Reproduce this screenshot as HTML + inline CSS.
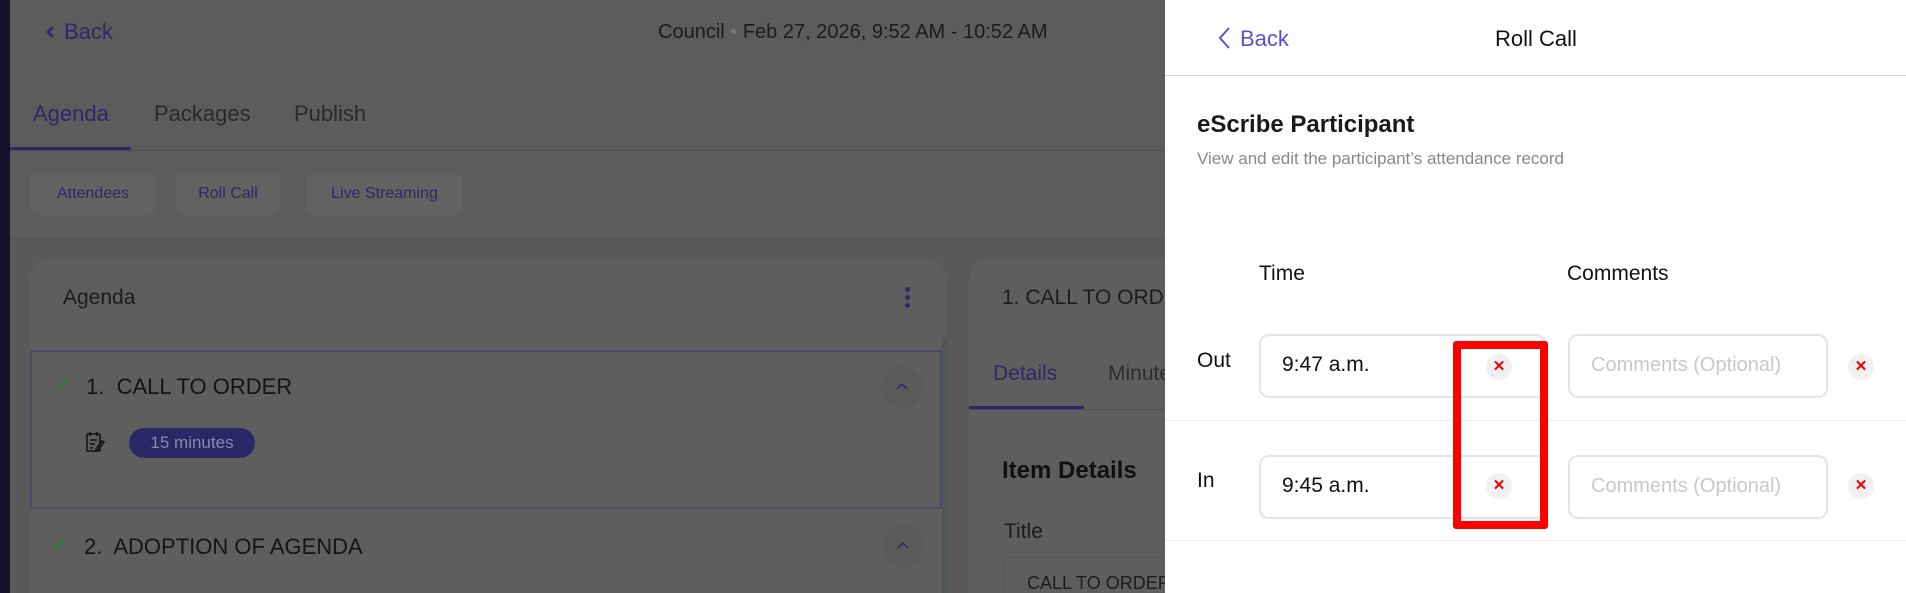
<!DOCTYPE html>
<html style="width:1906px;height:593px;overflow:hidden"><head><meta charset="utf-8"><style>
*{box-sizing:border-box;margin:0;padding:0}
body{width:1906px;height:593px;overflow:hidden;position:relative;background:#5c5c5c;font-family:"Liberation Sans",sans-serif}
.a{position:absolute;white-space:nowrap}
</style></head><body>
<div class="a" style="left:0;top:0;width:10px;height:593px;background:#14112a"></div>
<!-- left -->
<svg class="a" style="left:45px;top:25px" width="10" height="14" viewBox="0 0 10 14"><path d="M8 2L3 7l5 5" fill="none" stroke="#2e2866" stroke-width="2.5"/></svg>
<div class="a" style="left:64px;top:19px;font-size:22px;color:#2e2866">Back</div>
<div class="a" style="left:658px;top:21px;font-size:20px;color:#1c1c1c">Council <span style="color:#777">•</span> Feb 27, 2026, 9:52 AM - 10:52 AM</div>
<div class="a" style="left:33px;top:101px;font-size:22px;color:#2e2866">Agenda</div>
<div class="a" style="left:154px;top:101px;font-size:22px;color:#2a2a2a">Packages</div>
<div class="a" style="left:294px;top:101px;font-size:22px;color:#2a2a2a">Publish</div>
<div class="a" style="left:10px;top:150px;width:1155px;height:1px;background:#4e4e4e"></div>
<div class="a" style="left:10px;top:147px;width:121px;height:3px;background:#2e2866"></div>
<div class="a" style="left:30px;top:173px;width:126px;height:42px;border-radius:8px;background:#626262;color:#2e2866;font-size:16px;line-height:42px;text-align:center">Attendees</div>
<div class="a" style="left:176px;top:173px;width:104px;height:42px;border-radius:8px;background:#626262;color:#2e2866;font-size:16px;line-height:42px;text-align:center">Roll Call</div>
<div class="a" style="left:306px;top:173px;width:157px;height:42px;border-radius:8px;background:#626262;color:#2e2866;font-size:16px;line-height:42px;text-align:center">Live Streaming</div>
<div class="a" style="left:10px;top:238px;width:1155px;height:1px;background:#525252"></div>
<div class="a" style="left:10px;top:239px;width:1155px;height:354px;background:#595959"></div>
<div class="a" style="left:30px;top:259px;width:916px;height:340px;border-radius:22px 22px 0 0;background:#5e5e5e"></div>
<div class="a" style="left:63px;top:286px;font-size:21px;color:#1c1c1c">Agenda</div>
<div class="a" style="left:905px;top:287px;width:5px;height:5px;border-radius:50%;background:#2e2866;box-shadow:0 8px 0 #2e2866,0 16px 0 #2e2866"></div>
<div class="a" style="left:30px;top:335px;width:916px;height:1px;background:#585858"></div>
<div class="a" style="left:942px;top:338px;width:5px;height:255px;background:#4a5858"></div>
<div class="a" style="left:30px;top:350px;width:912px;height:159px;border:2px solid #4b4872"></div>
<div class="a" style="left:53px;top:373px;font-size:22px;color:#2f7a40">&#10003;</div>
<div class="a" style="left:86px;top:374px;font-size:22px;color:#141414">1.&nbsp; CALL TO ORDER</div>
<div class="a" style="left:881px;top:366px;width:42px;height:42px;border-radius:50%;background:#5a5a5a"></div>
<svg class="a" style="left:895px;top:381px" width="14" height="10" viewBox="0 0 14 10"><path d="M2 8l5-5 5 5" fill="none" stroke="#2e2866" stroke-width="1.5"/></svg>
<svg class="a" style="left:85px;top:430px" width="22" height="24" viewBox="0 0 22 24" fill="none" stroke="#111" stroke-width="1.5"><rect x="2" y="4" width="13" height="17" rx="1"/><path d="M5 2v4M12 2v4M5 10h7M5 14h5M5 18h3M19 12l-6 8-2 1 0-2 6-8z"/></svg>
<div class="a" style="left:129px;top:428px;width:126px;height:30px;border-radius:15px;background:#2c2566;color:#8c88b0;font-size:17px;line-height:30px;text-align:center">15 minutes</div>
<div class="a" style="left:51px;top:532px;font-size:22px;color:#2f7a40">&#10003;</div>
<div class="a" style="left:84px;top:534px;font-size:22px;color:#141414">2.&nbsp; ADOPTION OF AGENDA</div>
<div class="a" style="left:882px;top:525px;width:42px;height:42px;border-radius:50%;background:#5a5a5a"></div>
<svg class="a" style="left:896px;top:540px" width="14" height="10" viewBox="0 0 14 10"><path d="M2 8l5-5 5 5" fill="none" stroke="#2e2866" stroke-width="1.5"/></svg>
<div class="a" style="left:969px;top:259px;width:220px;height:340px;border-radius:22px 0 0 0;background:#5e5e5e"></div>
<div class="a" style="left:1002px;top:286px;font-size:21px;color:#1c1c1c">1. CALL TO ORDER</div>
<div class="a" style="left:993px;top:362px;font-size:21px;color:#2e2866">Details</div>
<div class="a" style="left:1108px;top:362px;font-size:21px;color:#2e2e2e">Minutes</div>
<div class="a" style="left:969px;top:409px;width:220px;height:1px;background:#4e4e4e"></div>
<div class="a" style="left:969px;top:406px;width:115px;height:3px;background:#2e2866"></div>
<div class="a" style="left:1002px;top:457px;font-size:24px;font-weight:bold;color:#111">Item Details</div>
<div class="a" style="left:1004px;top:520px;font-size:21px;color:#1c1c1c">Title</div>
<div class="a" style="left:1003px;top:557px;width:200px;height:50px;border:1px solid #545454;border-radius:8px;background:#5e5e5e"></div>
<div class="a" style="left:1027px;top:573px;font-size:18px;color:#1c1c1c">CALL TO ORDER</div>
<!-- right panel -->
<div class="a" style="left:1165px;top:0;width:741px;height:593px;background:#fff"></div>
<svg class="a" style="left:1217px;top:26px" width="14" height="24" viewBox="0 0 14 24"><path d="M12 2L3 12l9 10" fill="none" stroke="#5a4fcf" stroke-width="2"/></svg>
<div class="a" style="left:1240px;top:26px;font-size:22px;color:#5a4fcf">Back</div>
<div class="a" style="left:1495px;top:26px;font-size:22px;color:#111">Roll Call</div>
<div class="a" style="left:1165px;top:75px;width:741px;height:1px;background:#d4d4d4"></div>
<div class="a" style="left:1197px;top:111px;font-size:24px;font-weight:bold;color:#1a1a1a">eScribe Participant</div>
<div class="a" style="left:1197px;top:149px;font-size:17px;color:#888">View and edit the participant’s attendance record</div>
<div class="a" style="left:1259px;top:262px;font-size:21px;color:#111">Time</div>
<div class="a" style="left:1567px;top:262px;font-size:21px;color:#111">Comments</div>
<div class="a" style="left:1197px;top:349px;font-size:21px;color:#111">Out</div>
<div class="a" style="left:1259px;top:334px;width:287px;height:64px;border:2px solid #e4e4e4;border-radius:10px"></div>
<div class="a" style="left:1282px;top:353px;font-size:21px;color:#111">9:47 a.m.</div>
<div class="a" style="left:1568px;top:334px;width:260px;height:64px;border:2px solid #e4e4e4;border-radius:10px"></div>
<div class="a" style="left:1591px;top:354px;font-size:20px;color:#c8c8c8">Comments (Optional)</div>
<div class="a" style="left:1165px;top:420px;width:741px;height:1px;background:#ececec"></div>
<div class="a" style="left:1197px;top:469px;font-size:21px;color:#111">In</div>
<div class="a" style="left:1259px;top:455px;width:287px;height:64px;border:2px solid #e4e4e4;border-radius:10px"></div>
<div class="a" style="left:1282px;top:474px;font-size:21px;color:#111">9:45 a.m.</div>
<div class="a" style="left:1568px;top:455px;width:260px;height:64px;border:2px solid #e4e4e4;border-radius:10px"></div>
<div class="a" style="left:1591px;top:475px;font-size:20px;color:#c8c8c8">Comments (Optional)</div>
<div class="a" style="left:1165px;top:540px;width:741px;height:1px;background:#ececec"></div>
<div class="a" style="left:1486px;top:354px;width:26px;height:26px;border-radius:50%;background:#f0f0f0;color:#e00;font-size:15px;font-weight:bold;text-align:center;line-height:26px">✕</div>
<div class="a" style="left:1486px;top:473px;width:26px;height:26px;border-radius:50%;background:#f0f0f0;color:#e00;font-size:15px;font-weight:bold;text-align:center;line-height:26px">✕</div>
<div class="a" style="left:1848px;top:354px;width:26px;height:26px;border-radius:50%;background:#f0f0f0;color:#e00;font-size:15px;font-weight:bold;text-align:center;line-height:26px">✕</div>
<div class="a" style="left:1848px;top:473px;width:26px;height:26px;border-radius:50%;background:#f0f0f0;color:#e00;font-size:15px;font-weight:bold;text-align:center;line-height:26px">✕</div>
<div class="a" style="left:1453px;top:341px;width:95px;height:188px;border:8px solid #f00;border-radius:3px"></div>
</body></html>
